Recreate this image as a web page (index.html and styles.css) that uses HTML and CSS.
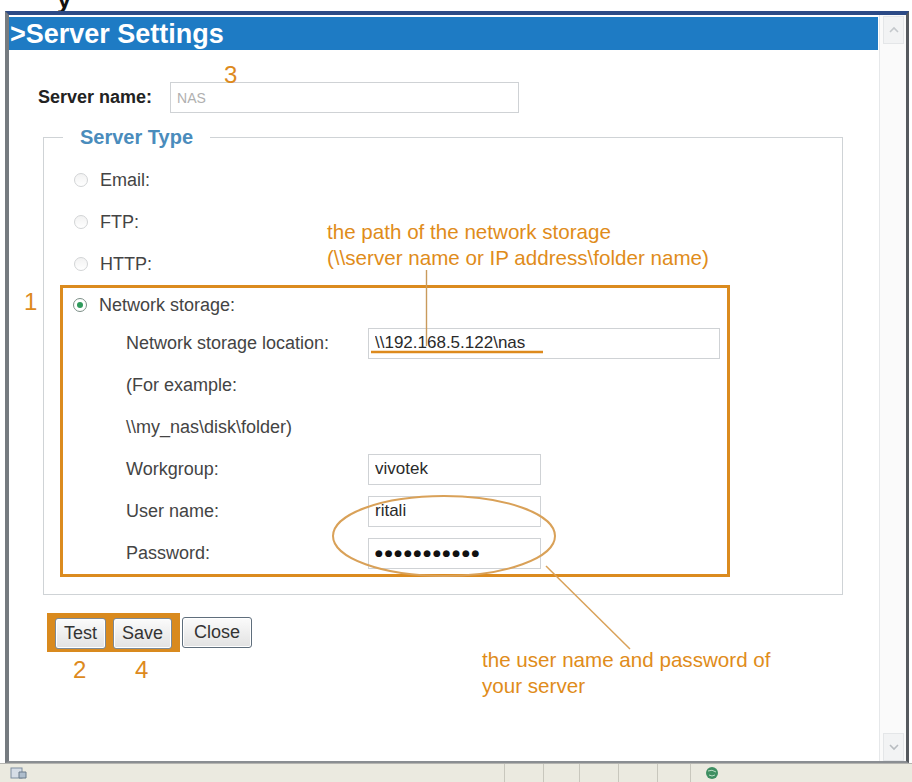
FILE: index.html
```html
<!DOCTYPE html>
<html>
<head>
  <meta charset="utf-8" />
  <title>Server Settings</title>
  <meta name="viewport" content="width=device-width,initial-scale=1.0" />
  <link rel="stylesheet" href="styles.css">
</head>
<body>
<div class="topstrip"><span>y</span></div>
<div class="window">
  <div class="page">
    <div class="header">&gt;Server Settings</div>
    <div class="content">
      <div class="nameRow">
        <label class="nameLabel">Server name:</label>
        <input class="field nameField" type="text" value="NAS" />
      </div>
      <fieldset class="serverType">
        <legend>Server Type</legend>
        <div class="opt"><span class="radio"></span>Email:</div>
        <div class="opt"><span class="radio"></span>FTP:</div>
        <div class="opt"><span class="radio"></span>HTTP:</div>
        <div class="mark">
          <div class="opt first"><span class="radio checked"></span>Network storage:</div>
          <div class="frow"><label>Network storage location:</label><input class="field wide" type="text" value="\\192.168.5.122\nas" /></div>
          <div class="frow"><label>(For example:</label></div>
          <div class="frow"><label>\\my_nas\disk\folder)</label></div>
          <div class="frow"><label>Workgroup:</label><input class="field short" type="text" value="vivotek" /></div>
          <div class="frow"><label>User name:</label><input class="field short" type="text" value="ritali" /></div>
          <div class="frow"><label>Password:</label><input class="field short pw" type="text" value="●●●●●●●●●●●" /></div>
        </div>
      </fieldset>
      <div class="actions">
        <div class="hl">
          <button class="btn">Test</button>
          <button class="btn">Save</button>
        </div>
        <button class="btn close">Close</button>
      </div>
    </div>
  </div>
  <div class="scrollbar">
    <div class="sbBtn">
      <svg width="12" height="8" viewBox="0 0 12 8"><path d="M2 6 L6 2 L10 6" fill="none" stroke="#c4c8cc" stroke-width="1.6"/></svg>
    </div>
    <div class="sbBtn">
      <svg width="12" height="8" viewBox="0 0 12 8"><path d="M2 2 L6 6 L10 2" fill="none" stroke="#b8bcc0" stroke-width="1.6"/></svg>
    </div>
  </div>
</div>
<div class="statusbar">
  <div class="sbMain">
    <svg width="18" height="14" viewBox="0 0 18 14"><rect x="1" y="2" width="11" height="10" fill="#d6dde6" stroke="#7f8ea0"/><path d="M9 6 L16 6 L16 12 L9 12 Z" fill="#aebdcc" stroke="#6a7a8a"/></svg>
  </div>
  <div class="cell" style="width:38px"></div>
  <div class="cell" style="width:35px"></div>
  <div class="cell" style="width:38px"></div>
  <div class="cell" style="width:38px"></div>
  <div class="cell" style="width:32px"></div>
  <div class="cell last">
    <svg width="14" height="14" viewBox="0 0 14 14"><circle cx="7" cy="7" r="6" fill="#3f8f62"/><path d="M3 5 Q7 3 11 6 M4 9 Q7 11 10 9" stroke="#b9dcc5" fill="none"/></svg>
  </div>
</div>

<div class="notes">
  <svg class="lines" width="912" height="782" viewBox="0 0 912 782">
    <line x1="426.5" y1="270" x2="426.5" y2="346" stroke="#c99a5c" stroke-width="1.4"/>
    <line x1="371" y1="352" x2="543" y2="352" stroke="#dd8a1d" stroke-width="2.5"/>
    <ellipse cx="444" cy="536" rx="111" ry="40" fill="none" stroke="#d9a158" stroke-width="2"/>
    <line x1="546" y1="566" x2="630" y2="649" stroke="#d9a158" stroke-width="1.5"/>
  </svg>
  <div class="note pathNote">the path of the network storage<br>(\\server name or IP address\folder name)</div>
  <div class="note userNote">the user name and password of<br>your server</div>
  <div class="num n3">3</div>
  <div class="num n1">1</div>
  <div class="num n2">2</div>
  <div class="num n4">4</div>
</div>
</body>
</html>
```
FILE: styles.css
```css
body {
  margin: 0;
  width: 912px;
  height: 782px;
  position: relative;
  overflow: hidden;
  display: flex;
  flex-direction: column;
  background: #fff;
  font-family: "Liberation Sans", Arial, sans-serif;
  color: #3a3a3a;
}

.topstrip {
  height: 11px;
  overflow: hidden;
  padding-left: 57px;
}
.topstrip span {
  display: block;
  font-size: 26px;
  font-weight: bold;
  line-height: 26px;
  margin-top: -14px;
  color: #111;
}

.window {
  flex: 1;
  display: flex;
  margin: 0 3px 0 5px;
  border-top: 4px solid #2c4a86;
  border-left: 4px solid #767b80;
  border-right: 3px solid #55595e;
  border-bottom: 2px solid #8a8e92;
}

.page {
  flex: 1;
  padding-top: 2px;
  background: #fff;
}

.header {
  height: 33px;
  margin-right: 1px;
  background: #1e7bc4;
  color: #fff;
  font-size: 27px;
  font-weight: bold;
  line-height: 34px;
  padding-left: 1px;
}

.content {
  padding: 32px 0 0 29px;
}

.nameRow {
  display: flex;
  align-items: center;
  gap: 18px;
}
.nameLabel {
  font-size: 18px;
  font-weight: bold;
  color: #222;
}

.field {
  box-sizing: border-box;
  height: 31px;
  border: 1px solid #cfd2d5;
  background: #fff;
  padding: 0 6px;
  font-family: "Liberation Sans", Arial, sans-serif;
  font-size: 17px;
  color: #2a2a2a;
  outline: none;
}
.nameField {
  width: 349px;
  font-size: 14px;
  color: #b0b0b0;
}
.wide {
  width: 352px;
}
.short {
  width: 173px;
}
.pw {
  font-family: "DejaVu Sans", sans-serif;
  font-size: 9px;
  letter-spacing: 1.8px;
  color: #111;
}

.serverType {
  margin: 13px 0 0 5px;
  width: 800px;
  box-sizing: border-box;
  border: 1px solid #cfd3d6;
  padding: 11px 16px 17px;
}
.serverType legend {
  margin-left: 3px;
  padding: 0 17px;
  font-size: 20px;
  font-weight: bold;
  line-height: 22px;
  color: #4a8cbc;
}

.opt {
  height: 42px;
  display: flex;
  align-items: center;
  gap: 12px;
  padding-left: 14px;
  font-size: 18px;
  color: #444;
}
.opt.first {
  height: 34px;
  padding-left: 10px;
}

.radio {
  width: 14px;
  height: 14px;
  box-sizing: border-box;
  border-radius: 50%;
  border: 1px solid #d2d4d6;
  background: linear-gradient(#f2f2f2, #fff);
  position: relative;
}
.radio.checked {
  border-color: #7b8e86;
  background: #fff;
}
.radio.checked::after {
  content: "";
  position: absolute;
  left: 3px;
  top: 3px;
  width: 6px;
  height: 6px;
  border-radius: 50%;
  background: #2f9a5c;
}

.mark {
  width: 670px;
  box-sizing: border-box;
  border: 3px solid #db8b1f;
}

.frow {
  height: 42px;
  display: flex;
  align-items: center;
  padding-left: 63px;
  font-size: 18px;
  color: #444;
}
.frow label {
  width: 242px;
  flex: none;
}

.actions {
  margin: 18px 0 0 9px;
  display: flex;
  align-items: center;
  gap: 2px;
}
.hl {
  display: flex;
  gap: 7px;
  padding: 5px 8px 3px;
  background: #d98a1e;
}

.btn {
  height: 31px;
  padding: 0 8px;
  border: 1px solid #7d8994;
  border-radius: 3px;
  box-shadow: inset 0 0 0 1px #fff;
  background: linear-gradient(#fbfbfb, #e2e2e2);
  font-family: "Liberation Sans", Arial, sans-serif;
  font-size: 18px;
  color: #333;
}
.btn.close {
  padding: 0 11px;
  border-color: #5f6e7c;
}

.scrollbar {
  width: 27px;
  box-sizing: border-box;
  border-left: 1px solid #e6e8ea;
  background: #fafafa;
  display: flex;
  flex-direction: column;
  justify-content: space-between;
  padding: 1px 2px 0 3px;
}
.sbBtn {
  height: 26px;
  border: 1px solid #e4e6e8;
  background: #f2f3f4;
  display: flex;
  align-items: center;
  justify-content: center;
}

.statusbar {
  height: 19px;
  box-sizing: border-box;
  display: flex;
  background: #ebeae0;
  border-top: 1px solid #b4b4b0;
}
.sbMain {
  width: 494px;
  padding-left: 10px;
  display: flex;
  align-items: center;
}
.cell {
  border-left: 1px solid #c8c7bd;
}
.cell.last {
  flex: 1;
  padding-left: 14px;
  display: flex;
  align-items: center;
}

.notes {
  position: absolute;
  left: 0;
  top: 0;
  width: 912px;
  height: 782px;
  pointer-events: none;
}
.lines {
  position: absolute;
  left: 0;
  top: 0;
}
.note {
  position: absolute;
  color: #e08c1a;
  font-size: 20.6px;
  line-height: 26px;
}
.pathNote {
  left: 327px;
  top: 219px;
}
.userNote {
  left: 482px;
  top: 647px;
}
.num {
  position: absolute;
  color: #dd8a1d;
  font-size: 24px;
  line-height: 24px;
}
.n3 { left: 224px; top: 63px; }
.n1 { left: 24px; top: 290px; }
.n2 { left: 73px; top: 658px; }
.n4 { left: 135px; top: 658px; }
```
